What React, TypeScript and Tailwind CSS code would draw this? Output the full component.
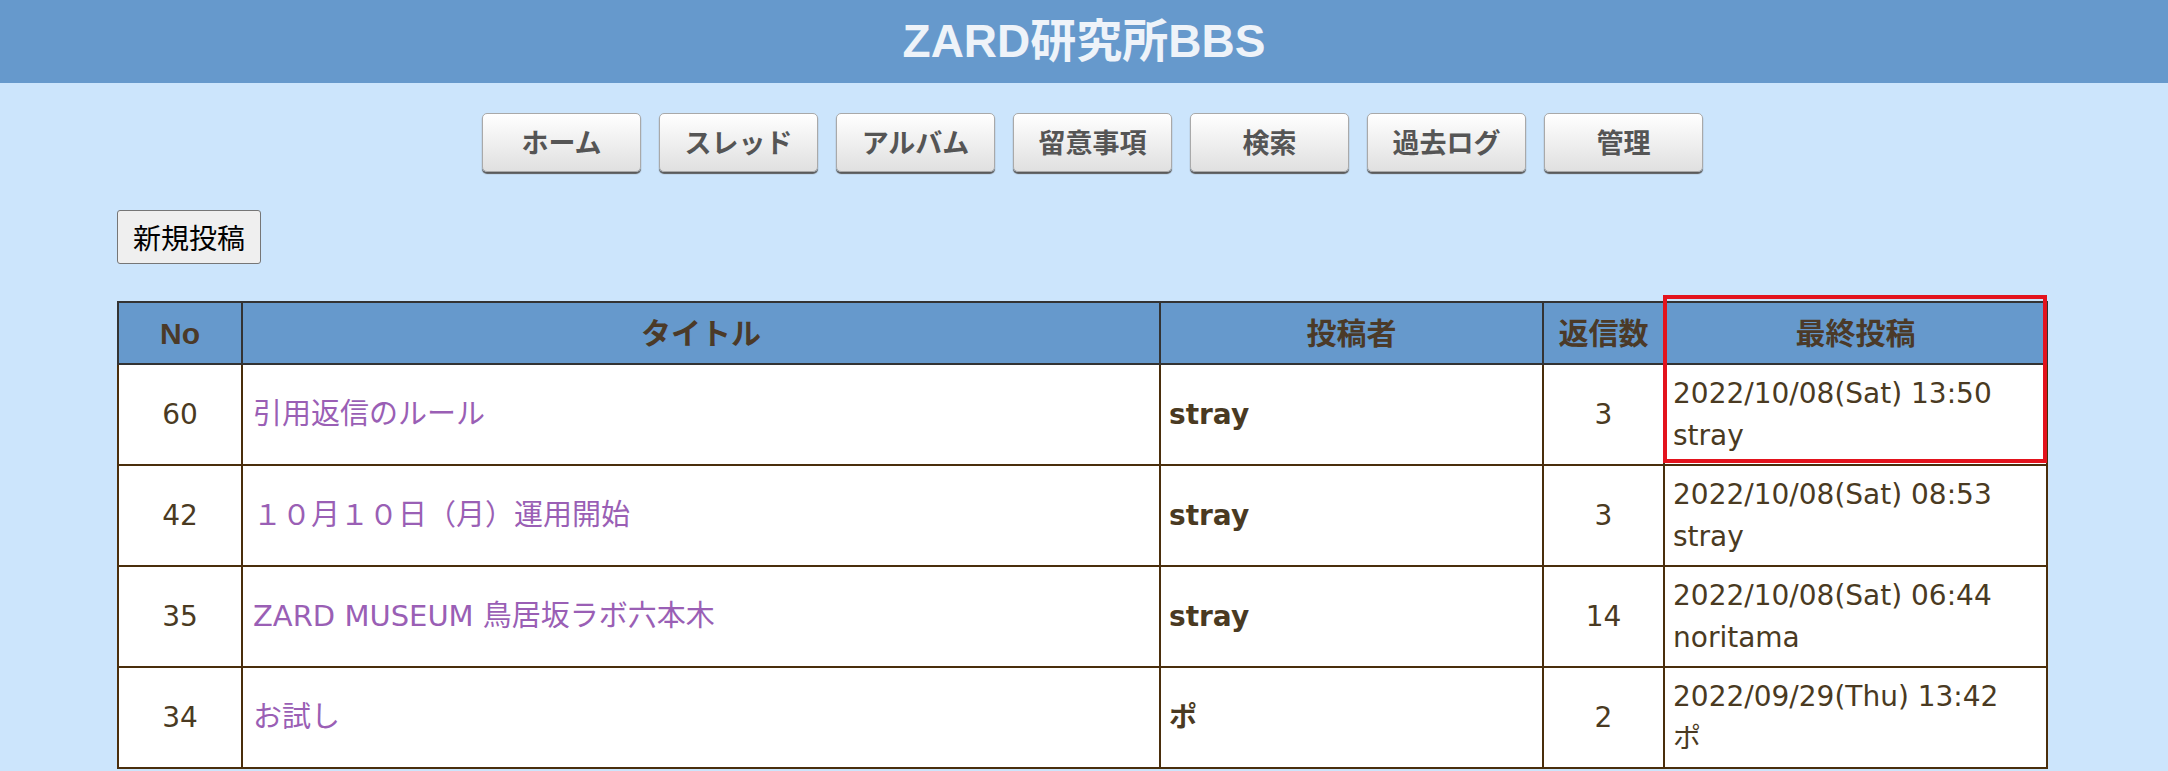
const navItems = ['ホーム', 'スレッド', 'アルバム', '留意事項', '検索', '過去ログ', '管理'];

type Thread = {
  no: number;
  title: string;
  author: string;
  replies: number;
  lastDate: string;
  lastBy: string;
};

const threads: Thread[] = [
  { no: 60, title: '引用返信のルール', author: 'stray', replies: 3, lastDate: '2022/10/08(Sat) 13:50', lastBy: 'stray' },
  { no: 42, title: '１０月１０日（月）運用開始', author: 'stray', replies: 3, lastDate: '2022/10/08(Sat) 08:53', lastBy: 'stray' },
  { no: 35, title: 'ZARD MUSEUM 鳥居坂ラボ六本木', author: 'stray', replies: 14, lastDate: '2022/10/08(Sat) 06:44', lastBy: 'noritama' },
  { no: 34, title: 'お試し', author: 'ポ', replies: 2, lastDate: '2022/09/29(Thu) 13:42', lastBy: 'ポ' },
];

const bodyFont = "font-['DejaVu_Sans','Noto_Sans_CJK_JP',sans-serif]";
const cell = 'border-2 border-[#4a2e0c]';

function NavBar() {
  return (
    <nav className="mt-[30px] flex justify-center gap-[18px] pl-[17px]">
      {navItems.map((label) => (
        <a
          key={label}
          href="#"
          className="flex h-[59px] w-[159px] items-center justify-center rounded-[5px] border border-[#a9a9a9] bg-linear-to-b from-white to-[#e0e0e0] font-['Noto_Sans_CJK_JP',sans-serif] text-[27px] font-bold text-[#555] shadow-[0_2px_1px_#5a5a5a]"
        >
          {label}
        </a>
      ))}
    </nav>
  );
}

function ThreadTable() {
  return (
    <div className="relative ml-[117px] mt-[37px] w-[1929px]">
      <table className={`w-full table-fixed border-collapse bg-white text-[28px] text-[#4a3a22] ${bodyFont}`}>
        <colgroup>
          <col className="w-[124px]" />
          <col className="w-[918px]" />
          <col className="w-[383px]" />
          <col className="w-[121px]" />
          <col className="w-[383px]" />
        </colgroup>
        <thead>
          <tr className="h-[62px] bg-[#6699cc] font-['Liberation_Sans','Noto_Sans_CJK_JP',sans-serif] text-[30px] font-bold text-[#4b3a28]">
            <th className="border-2 border-[#333]">No</th>
            <th className="border-2 border-[#333]">タイトル</th>
            <th className="border-2 border-[#333]">投稿者</th>
            <th className="border-2 border-[#333]">返信数</th>
            <th className="border-2 border-[#333]">最終投稿</th>
          </tr>
        </thead>
        <tbody>
          {threads.map((t) => (
            <tr key={t.no} className="h-[101px]">
              <td className={`${cell} text-center`}>{t.no}</td>
              <td className={`${cell} pl-[10px] text-[29px] text-[#9a5fb5]`}>
                <a href="#">{t.title}</a>
              </td>
              <td className={`${cell} pl-[8px] font-bold`}>{t.author}</td>
              <td className={`${cell} text-center`}>{t.replies}</td>
              <td className={`${cell} pl-[8px] leading-[42px]`}>
                {t.lastDate}
                <br />
                {t.lastBy}
              </td>
            </tr>
          ))}
        </tbody>
      </table>
      {/* highlight around the latest post column */}
      <div className="pointer-events-none absolute left-[1546px] top-[-6px] h-[168px] w-[384px] border-4 border-[#e3131d]" />
    </div>
  );
}

export default function App() {
  return (
    <div className="min-h-screen bg-[#cce5fc]">
      <header className="flex h-[83px] items-center justify-center bg-[#6699cc]">
        <h1 className="font-['Liberation_Sans','Noto_Sans_CJK_JP',sans-serif] text-[46px] font-bold text-[#eef3f9]">
          ZARD研究所BBS
        </h1>
      </header>
      <NavBar />
      <button className="ml-[117px] mt-[38px] h-[54px] rounded-[3px] border border-[#767676] bg-[#efefef] px-[15px] font-['Noto_Sans_CJK_JP',sans-serif] text-[28px] text-black">
        新規投稿
      </button>
      <ThreadTable />
    </div>
  );
}
